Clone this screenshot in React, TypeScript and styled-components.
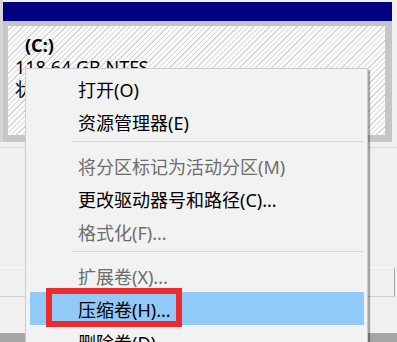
import styled, { createGlobalStyle } from 'styled-components';

const GlobalStyle = createGlobalStyle`
	html, body {
		margin: 0;
		padding: 0;
		background: #f0f0f0;
	}
	body {
		font-family: "Noto Sans", "Noto Sans CJK SC", sans-serif;
	}
`;

type Item = { label: string; disabled?: boolean; active?: boolean } | 'sep';

const items: Item[] = [
	{ label: '打开(O)' },
	{ label: '资源管理器(E)' },
	'sep',
	{ label: '将分区标记为活动分区(M)', disabled: true },
	{ label: '更改驱动器号和路径(C)...' },
	{ label: '格式化(F)...', disabled: true },
	'sep',
	{ label: '扩展卷(X)...', disabled: true },
	{ label: '压缩卷(H)...', active: true },
	{ label: '删除卷(D)...' },
];

function App() {
	return (
		<Screen>
			<GlobalStyle />
			<VolumeRow>
				<Volume>
					<VolumeHeader />
					<VolumeFrame>
						<Hatched>
							<DriveName>(C:)</DriveName>
							<VolumeLine>118.64 GB NTFS</VolumeLine>
							<VolumeLine>状态良好 (启动, 页面文件, 故障转储)</VolumeLine>
						</Hatched>
					</VolumeFrame>
				</Volume>
			</VolumeRow>
			<Divider />
			<LowerRow />
			<BottomBand />

			<Menu>
				{items.map((item, i) =>
					item === 'sep' ? (
						<Separator key={i} />
					) : (
						<MenuItem key={i} $disabled={item.disabled} $active={item.active}>
							{item.label}
							{item.active && <Marker />}
						</MenuItem>
					)
				)}
			</Menu>
		</Screen>
	);
}

const Screen = styled.div`
	position: relative;
	width: 397px;
	height: 342px;
	overflow: hidden;
	background: #f0f0f0;
	display: flex;
	flex-direction: column;
`;

const VolumeRow = styled.div`
	padding: 2px 5px 0 3px;
	background: linear-gradient(to right, #d6d6d6 0 3px, #f0f0f0 3px);
`;

const Volume = styled.div`
	display: flex;
	flex-direction: column;
`;

const VolumeHeader = styled.div`
	height: 19px;
	background: #000080;
`;

const VolumeFrame = styled.div`
	background: #c6c6c6;
	padding: 5px 7px 7px 5px;
`;

const Hatched = styled.div`
	height: 109px;
	box-sizing: border-box;
	padding: 8px 0 0 7px;
	background: repeating-linear-gradient(
		135deg,
		#fbfbfb 0px,
		#fbfbfb 2.8px,
		#d6d6d6 2.8px,
		#d6d6d6 3.8px
	);
	font-size: 18px;
	line-height: 22px;
	color: #000;
	white-space: nowrap;
	overflow: hidden;
`;

const DriveName = styled.div`
	font-weight: bold;
	margin-left: 10px;
`;

const VolumeLine = styled.div``;

const Divider = styled.div`
	margin-top: 5px;
	height: 1px;
	background: #d9d9d9;
`;

const LowerRow = styled.div`
	margin: 119px 2px 0 0;
	height: 30px;
	box-sizing: border-box;
	border: 1px solid #cfcfcf;
	border-top-color: #fafafa;
	border-right-color: #a9a9a9;
	border-left: none;
	background: #f0f0f0;
`;

const BottomBand = styled.div`
	margin-top: 36px;
	flex: 1;
	background: #a6a6a6;
`;

const Menu = styled.div`
	position: absolute;
	left: 25px;
	top: 68px;
	width: 343px;
	box-sizing: border-box;
	padding: 3px 3px 6px 4px;
	background: #f2f2f2;
	border: 1px solid #cccccc;
	box-shadow: 2px 2px 1px rgba(0, 0, 0, 0.32);
	font-size: 18px;
	white-space: nowrap;
`;

const MenuItem = styled.div<{ $disabled?: boolean; $active?: boolean }>`
	position: relative;
	height: 33px;
	display: flex;
	align-items: center;
	padding-left: 48px;
	color: ${(p) => (p.$disabled ? '#6d6d6d' : '#000000')};
	background: ${(p) => (p.$active ? '#91c9f7' : 'transparent')};
`;

const Separator = styled.div`
	height: 11px;
	box-sizing: border-box;
	padding-top: 3px;
	margin-left: 42px;
	margin-right: 1px;
	&::before {
		content: '';
		display: block;
		height: 1px;
		background: #d7d7d7;
	}
`;

const Marker = styled.div`
	position: absolute;
	left: 16px;
	top: -4px;
	width: 136px;
	height: 39px;
	box-sizing: border-box;
	border: 6px solid #ec2a30;
`;

export default App;
